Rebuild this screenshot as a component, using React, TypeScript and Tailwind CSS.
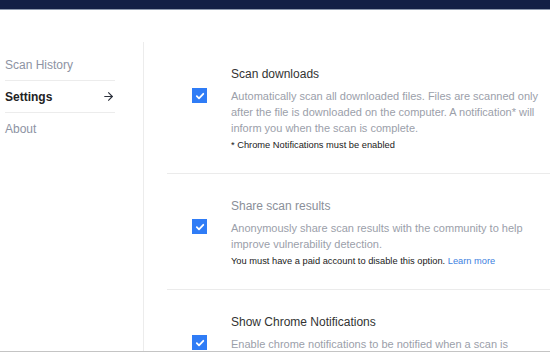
import { ArrowRight } from "lucide-react";

function Check() {
  return (
    <div className="w-[15px] h-[15px] bg-[#2f7cf6] flex items-center justify-center shrink-0">
      <svg width="10" height="10" viewBox="0 0 10 10" fill="none">
        <path
          d="M1.8 5.2 L4 7.3 L8.3 2.8"
          stroke="white"
          strokeWidth="1.8"
          strokeLinecap="round"
          strokeLinejoin="round"
        />
      </svg>
    </div>
  );
}

const nav = [
  { label: "Scan History", active: false },
  { label: "Settings", active: true },
  { label: "About", active: false },
];

function Option({
  title,
  muted,
  checkTop,
  lines,
  note,
}: {
  title: string;
  muted?: boolean;
  checkTop: string;
  lines: React.ReactNode;
  note?: React.ReactNode;
}) {
  return (
    <div className="border-b border-[#ebebeb] pt-[24px] pb-[21px] pl-[25px] flex">
      <div className={`w-[39px] shrink-0 ${checkTop}`}>
        <Check />
      </div>
      <div className="flex-1 whitespace-nowrap">
        <div
          className={`text-[12px] leading-[16px] ${muted ? "text-[#8a8f99]" : "text-[#333333]"}`}
        >
          {title}
        </div>
        <div className="mt-[6px] text-[11px] leading-[16px] text-[#9ba0aa]">{lines}</div>
        {note && (
          <div className="mt-[3px] text-[9.3px] leading-[13px] text-[#1a1a1a]">{note}</div>
        )}
      </div>
    </div>
  );
}

export default function App() {
  return (
    <div
      className="h-[352px] overflow-hidden border-b border-[#c4c4c4] bg-white"
      style={{ fontFamily: '"Liberation Sans", Arial, sans-serif' }}
    >
      <div className="h-[9px] bg-[#131f45]" />
      <div className="h-px bg-[#8e99ad]" />
      <div className="flex pt-[32px] h-full">
        {/* Sidebar */}
        <div className="w-[144px] shrink-0 border-r border-[#ececec] pl-[5px] pt-[7px]">
          <div className="w-[110px]">
            {nav.map((n, i) => (
              <div
                key={n.label}
                className={`h-[32px] flex items-center justify-between ${i < nav.length - 1 ? "border-b border-[#ececec]" : ""}`}
              >
                <span
                  className={`text-[12px] ${n.active ? "font-bold text-[#222222]" : "text-[#8d93a3]"}`}
                >
                  {n.label}
                </span>
                {n.active && <ArrowRight size={13} strokeWidth={2} className="text-[#2a2f3a]" />}
              </div>
            ))}
          </div>
        </div>

        {/* Settings */}
        <div className="flex-1 min-w-0 pl-[23px]">
          <Option
            title="Scan downloads"
            checkTop="mt-[22px]"
            lines={
              <>
                Automatically scan all downloaded files. Files are scanned only
                <br />
                after the file is downloaded on the computer. A notification* will
                <br />
                inform you when the scan is complete.
              </>
            }
            note="* Chrome Notifications must be enabled"
          />
          <Option
            title="Share scan results"
            muted
            checkTop="mt-[21px]"
            lines={
              <>
                Anonymously share scan results with the community to help
                <br />
                improve vulnerability detection.
              </>
            }
            note={
              <>
                You must have a paid account to disable this option.{" "}
                <span className="text-[#3d7fe0]">Learn more</span>
              </>
            }
          />
          <Option
            title="Show Chrome Notifications"
            checkTop="mt-[21px]"
            lines={<>Enable chrome notifications to be notified when a scan is</>}
          />
        </div>
      </div>
    </div>
  );
}
